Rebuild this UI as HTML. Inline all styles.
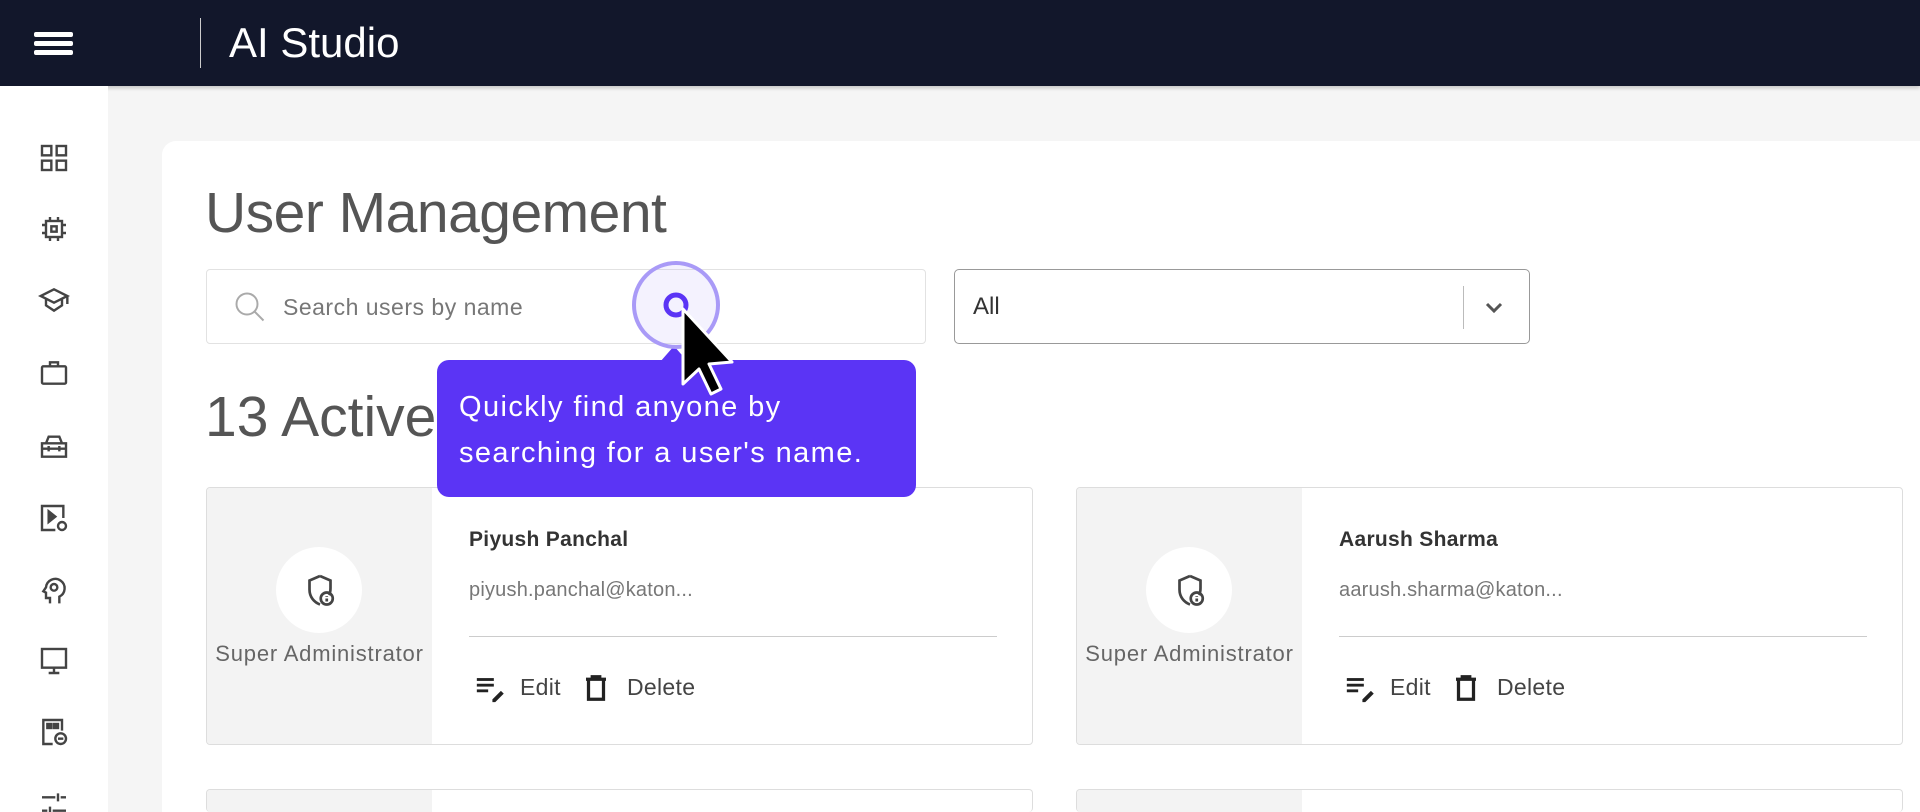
<!DOCTYPE html>
<html style="width:1920px;height:812px;overflow:hidden"><head><meta charset="utf-8"><style>
*{margin:0;padding:0;box-sizing:border-box}
body{width:1920px;height:812px;overflow:hidden;background:#f5f5f5;font-family:"Liberation Sans",sans-serif;position:relative}
.hdr{position:absolute;left:0;top:0;width:1920px;height:86px;background:#12172b;box-shadow:0 2px 4px rgba(0,0,0,.2)}
.side{position:absolute;left:0;top:86px;width:108px;height:726px;background:#fff}
.card{position:absolute;left:162px;top:141px;width:1758px;height:671px;background:#fff;border-radius:14px 0 0 0}
.abs{position:absolute}
.ic{position:absolute;left:38px;width:32px;height:32px}
.uc{position:absolute;width:827px;height:258px;border:1px solid #ddd;border-radius:4px;background:#fff;overflow:hidden}
.uc .gp{position:absolute;left:0;top:0;width:225px;height:100%;background:#f3f3f3}
.uc .circ{position:absolute;left:69px;top:59px;width:86px;height:86px;border-radius:50%;background:#fff}
.uc .role{position:absolute;left:0;width:225px;top:153px;text-align:center;font-size:22px;letter-spacing:0.8px;color:#666;white-space:nowrap}
.uc .nm{position:absolute;left:262px;top:40px;font-size:21px;font-weight:bold;color:#333;letter-spacing:0.3px}
.uc .em{position:absolute;left:262px;top:91px;font-size:20px;color:#777;letter-spacing:0.2px}
.uc .ln{position:absolute;left:262px;top:148px;width:528px;height:1px;background:#ccc}
.uc .t{position:absolute;top:186px;font-size:23px;color:#444;letter-spacing:0.3px}
</style></head><body>
<div class="hdr">
  <div class="abs" style="left:34px;top:32px;width:39px;height:5px;background:#fff;border-radius:2px"></div>
  <div class="abs" style="left:34px;top:41px;width:39px;height:5px;background:#fff;border-radius:2px"></div>
  <div class="abs" style="left:34px;top:50px;width:39px;height:5px;background:#fff;border-radius:2px"></div>
  <div class="abs" style="left:200px;top:18px;width:1px;height:50px;background:#ccc"></div>
  <div class="abs" style="left:229px;top:18px;font-size:42px;color:#fff;line-height:50px">AI Studio</div>
</div>
<div class="side">
<svg class="ic" style="top:56px" viewBox="0 0 24 24" fill="none" stroke="#444" stroke-width="1.8"><rect x="3" y="3" width="7" height="7"/><rect x="14" y="3" width="7" height="7"/><rect x="3" y="14" width="7" height="7"/><rect x="14" y="14" width="7" height="7"/></svg>
<svg class="ic" style="top:127px" viewBox="0 0 24 24" fill="none" stroke="#444" stroke-width="1.8"><rect x="6" y="6" width="12" height="12"/><rect x="10" y="10" width="4" height="4"/><path d="M9 3v3M15 3v3M9 18v3M15 18v3M3 9h3M3 15h3M18 9h3M18 15h3"/></svg>
<svg class="ic" style="top:198px" viewBox="0 0 24 24" fill="none" stroke="#444" stroke-width="1.8"><path d="M12 4L2 9l10 5 10-5zM6 11v5l6 4 6-4v-5M22 9v6"/></svg>
<svg class="ic" style="top:271px" viewBox="0 0 24 24" fill="none" stroke="#444" stroke-width="1.8"><rect x="3" y="7" width="18" height="13" rx="1"/><path d="M9 7V4h6v3"/></svg>
<svg class="ic" style="top:344px" viewBox="0 0 24 24" fill="none" stroke="#444" stroke-width="1.8"><path d="M3 10h18v10H3zM6 10l2-5h8l2 5M3 14h18M8 12v4M16 12v4"/></svg>
<svg class="ic" style="top:416px" viewBox="0 0 24 24" fill="none" stroke="#444" stroke-width="1.8"><path d="M13 21H3V3h16v9"/><path d="M8 7l5 4-5 4z" fill="#444"/><circle cx="18" cy="18" r="3"/></svg>
<svg class="ic" style="top:488px" viewBox="0 0 24 24" fill="none" stroke="#444" stroke-width="1.8"><path d="M9 22v-4H6v-4l-2-1 2-3a7 7 0 1 1 10 7v5"/><circle cx="12" cy="10" r="2.5"/></svg>
<svg class="ic" style="top:559px" viewBox="0 0 24 24" fill="none" stroke="#444" stroke-width="1.8"><rect x="3" y="3" width="18" height="14"/><path d="M12 17v4M8 21h8"/></svg>
<svg class="ic" style="top:630px" viewBox="0 0 24 24" fill="none" stroke="#444" stroke-width="1.8"><path d="M11 21H4V3h14v8"/><rect x="7" y="6" width="3" height="3" fill="#444"/><rect x="12" y="6" width="3" height="3" fill="#444"/><circle cx="17" cy="17" r="4"/><path d="M15 17h4"/></svg>
<svg class="ic" style="top:702px" viewBox="0 0 24 24" fill="none" stroke="#444" stroke-width="1.8"><path d="M3 7h10M17 7h4M15 4v6M3 17h4M11 17h10M9 14v6"/></svg>
</div>
<div class="card"></div>
<div class="abs" style="left:205px;top:180px;font-size:57px;color:#555;letter-spacing:-0.5px">User Management</div>
<div class="abs" style="left:206px;top:269px;width:720px;height:75px;border:1px solid #e2e2e2;border-radius:4px;background:#fff"></div>
<svg class="abs" style="left:232px;top:289px" width="36" height="36" viewBox="0 0 24 24" fill="none" stroke="#aaa" stroke-width="1.3"><circle cx="10" cy="10" r="7"/><path d="M15 15l6 6"/></svg>
<div class="abs" style="left:283px;top:294px;font-size:23px;color:#777;letter-spacing:0.5px">Search users by name</div>
<div class="abs" style="left:954px;top:269px;width:576px;height:75px;border:1px solid #999;border-radius:5px;background:#fff"></div>
<div class="abs" style="left:973px;top:293px;font-size:24px;color:#333">All</div>
<div class="abs" style="left:1463px;top:286px;width:1px;height:43px;background:#bbb"></div>
<svg class="abs" style="left:1482px;top:295px" width="24" height="24" viewBox="0 0 24 24" fill="none" stroke="#555" stroke-width="3"><path d="M5 9l7 7 7-7"/></svg>
<div class="abs" style="left:205px;top:384px;font-size:57px;color:#555">13 Active Users</div>
<div class="uc" style="left:206px;top:487px">
 <div class="gp"></div><div class="circ"></div>
 <svg class="abs" style="left:95px;top:85px" width="36" height="36" viewBox="0 0 24 24" fill="none" stroke="#444" stroke-width="1.8"><path d="M12 2l7 3v5c0 2-.3 3.5-1 4.7M12 21c-4-1.5-7-5-7-10V5l7-3"/><circle cx="16.5" cy="17" r="4"/><path d="M16.5 15.5v.5M16.5 17v2"/></svg>
 <div class="role">Super Administrator</div>
 <div class="nm">Piyush Panchal</div><div class="em">piyush.panchal@katon...</div><div class="ln"></div>
 <svg class="abs" style="left:266px;top:183px" width="36" height="34" viewBox="0 0 24 24" fill="#222"><rect x="2" y="5" width="12" height="2"/><rect x="2" y="9" width="12" height="2"/><rect x="2" y="13" width="8" height="2"/><path d="M13 20l6-6 2 2-6 6h-2z"/></svg>
 <div class="t" style="left:313px">Edit</div>
 <svg class="abs" style="left:374px;top:182px" width="30" height="36" viewBox="0 0 24 24" fill="none" stroke="#222" stroke-width="2.6"><path d="M4 5h16M9 5V3h6v2M6 5v16h12V5"/></svg>
 <div class="t" style="left:420px">Delete</div>
</div>
<div class="uc" style="left:1076px;top:487px">
 <div class="gp"></div><div class="circ"></div>
 <svg class="abs" style="left:95px;top:85px" width="36" height="36" viewBox="0 0 24 24" fill="none" stroke="#444" stroke-width="1.8"><path d="M12 2l7 3v5c0 2-.3 3.5-1 4.7M12 21c-4-1.5-7-5-7-10V5l7-3"/><circle cx="16.5" cy="17" r="4"/><path d="M16.5 15.5v.5M16.5 17v2"/></svg>
 <div class="role">Super Administrator</div>
 <div class="nm">Aarush Sharma</div><div class="em">aarush.sharma@katon...</div><div class="ln"></div>
 <svg class="abs" style="left:266px;top:183px" width="36" height="34" viewBox="0 0 24 24" fill="#222"><rect x="2" y="5" width="12" height="2"/><rect x="2" y="9" width="12" height="2"/><rect x="2" y="13" width="8" height="2"/><path d="M13 20l6-6 2 2-6 6h-2z"/></svg>
 <div class="t" style="left:313px">Edit</div>
 <svg class="abs" style="left:374px;top:182px" width="30" height="36" viewBox="0 0 24 24" fill="none" stroke="#222" stroke-width="2.6"><path d="M4 5h16M9 5V3h6v2M6 5v16h12V5"/></svg>
 <div class="t" style="left:420px">Delete</div>
</div>
<div class="uc" style="left:206px;top:789px;height:23px;border-bottom:none"><div class="gp"></div></div>
<div class="uc" style="left:1076px;top:789px;height:23px;border-bottom:none"><div class="gp"></div></div>
<div class="abs" style="left:437px;top:360px;width:479px;height:137px;background:#5b34f5;border-radius:12px"></div>
<div class="abs" style="left:660px;top:346px;width:0;height:0;border-left:14px solid transparent;border-right:14px solid transparent;border-bottom:16px solid #5b34f5"></div>
<div class="abs" style="left:459px;top:384px;font-size:29px;line-height:46px;color:#fff;letter-spacing:1.4px;white-space:nowrap">Quickly find anyone by<br>searching for a user's name.</div>
<svg class="abs" style="left:620px;top:250px" width="140" height="150" viewBox="0 0 140 150">
<circle cx="56" cy="55" r="42" fill="rgba(180,165,250,.15)" stroke="#a99af7" stroke-width="4"/>
<circle cx="56" cy="55" r="10" fill="none" stroke="#5b34f5" stroke-width="5"/>
<path d="M63 59 L63 134 L79 119 L91 144 L101 139 L89 114 L112 112 Z" fill="#000" stroke="#fff" stroke-width="3" stroke-linejoin="round"/>
</svg>
</body></html>
